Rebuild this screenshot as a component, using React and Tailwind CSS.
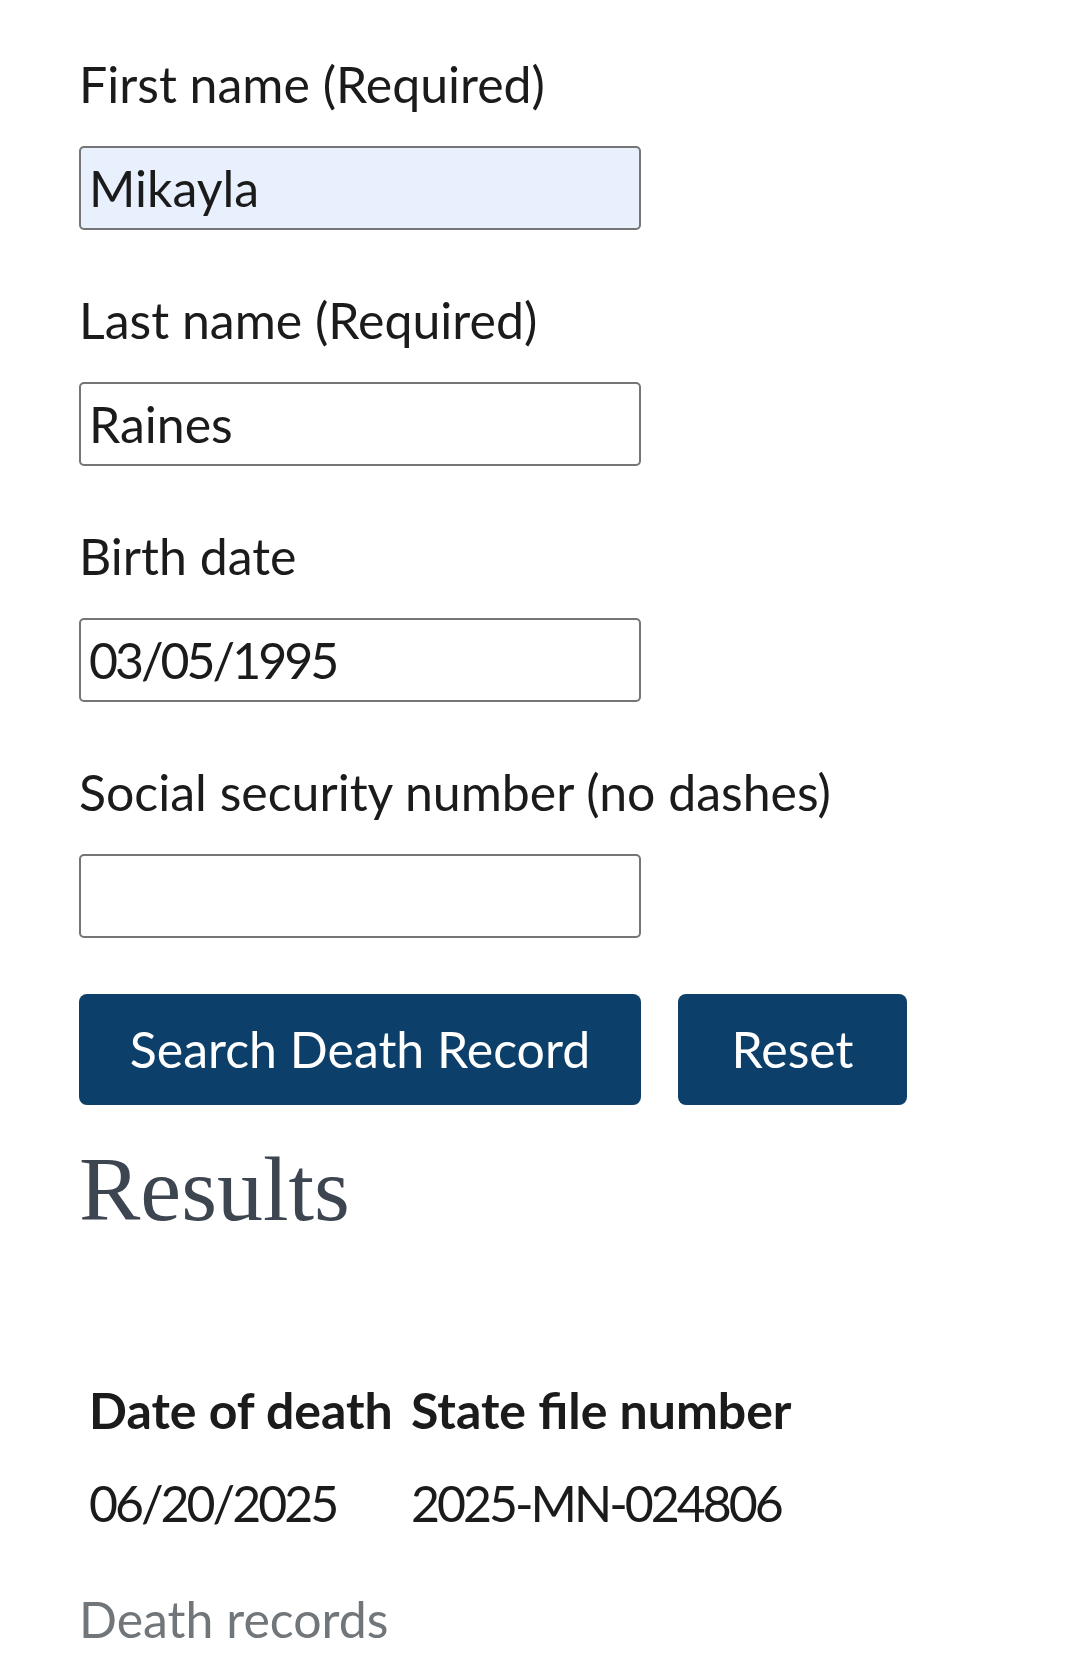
export default function App() {
  const fields = [
    { label: "First name (Required)", value: "Mikayla", filled: true },
    { label: "Last name (Required)", value: "Raines" },
    { label: "Birth date", value: "03/05/1995", num: true },
    { label: "Social security number (no dashes)", value: "" },
  ];
  return (
    <div
      className="w-[1080px] min-h-[1678px] bg-white pl-[79px] pt-[54px] text-[#1b1b1b]"
      style={{ fontFamily: "Lato, 'Noto Sans', sans-serif" }}
    >
      <div className="flex flex-col gap-[60px]">
        {fields.map((f) => (
          <div key={f.label} className="flex flex-col">
            <label className="block h-[61px] text-[50px] leading-[61px] whitespace-nowrap">
              {f.label}
            </label>
            <input
              readOnly
              value={f.value}
              className={
                "mt-[31px] h-[84px] w-[562px] rounded-[5px] border-2 border-[#757575] px-[8px] text-[50px] text-[#1b1b1b] outline-none " +
                (f.filled ? "bg-[#e8f0fe]" : "bg-white") +
                (f.num ? " tracking-[-3px]" : "")
              }
            />
          </div>
        ))}
      </div>

      <div className="mt-[56px] flex gap-[37px]">
        <button className="h-[111px] w-[562px] rounded-[8px] bg-[#0c406a] text-[50px] text-white">
          Search Death Record
        </button>
        <button className="h-[111px] w-[229px] rounded-[8px] bg-[#0c406a] text-[50px] text-white">
          Reset
        </button>
      </div>

      <h2
        className="mt-[31px] text-[92px] leading-[106px] text-[#3d4551]"
        style={{ fontFamily: "'Liberation Serif', 'DejaVu Serif', serif" }}
      >
        Results
      </h2>

      <div className="mt-[138px] pl-[10px]">
        <div className="grid grid-cols-[322px_auto] text-[50px] leading-[61px]">
          <div className="font-bold whitespace-nowrap">Date of death</div>
          <div className="font-bold whitespace-nowrap">State file number</div>
          <div className="mt-[32px] whitespace-nowrap tracking-[-3px]">06/20/2025</div>
          <div className="mt-[32px] whitespace-nowrap tracking-[-3px]">2025-MN-024806</div>
        </div>
      </div>

      <p className="mt-[55px] text-[50px] leading-[61px] text-[#71767a]">Death records</p>
    </div>
  );
}
